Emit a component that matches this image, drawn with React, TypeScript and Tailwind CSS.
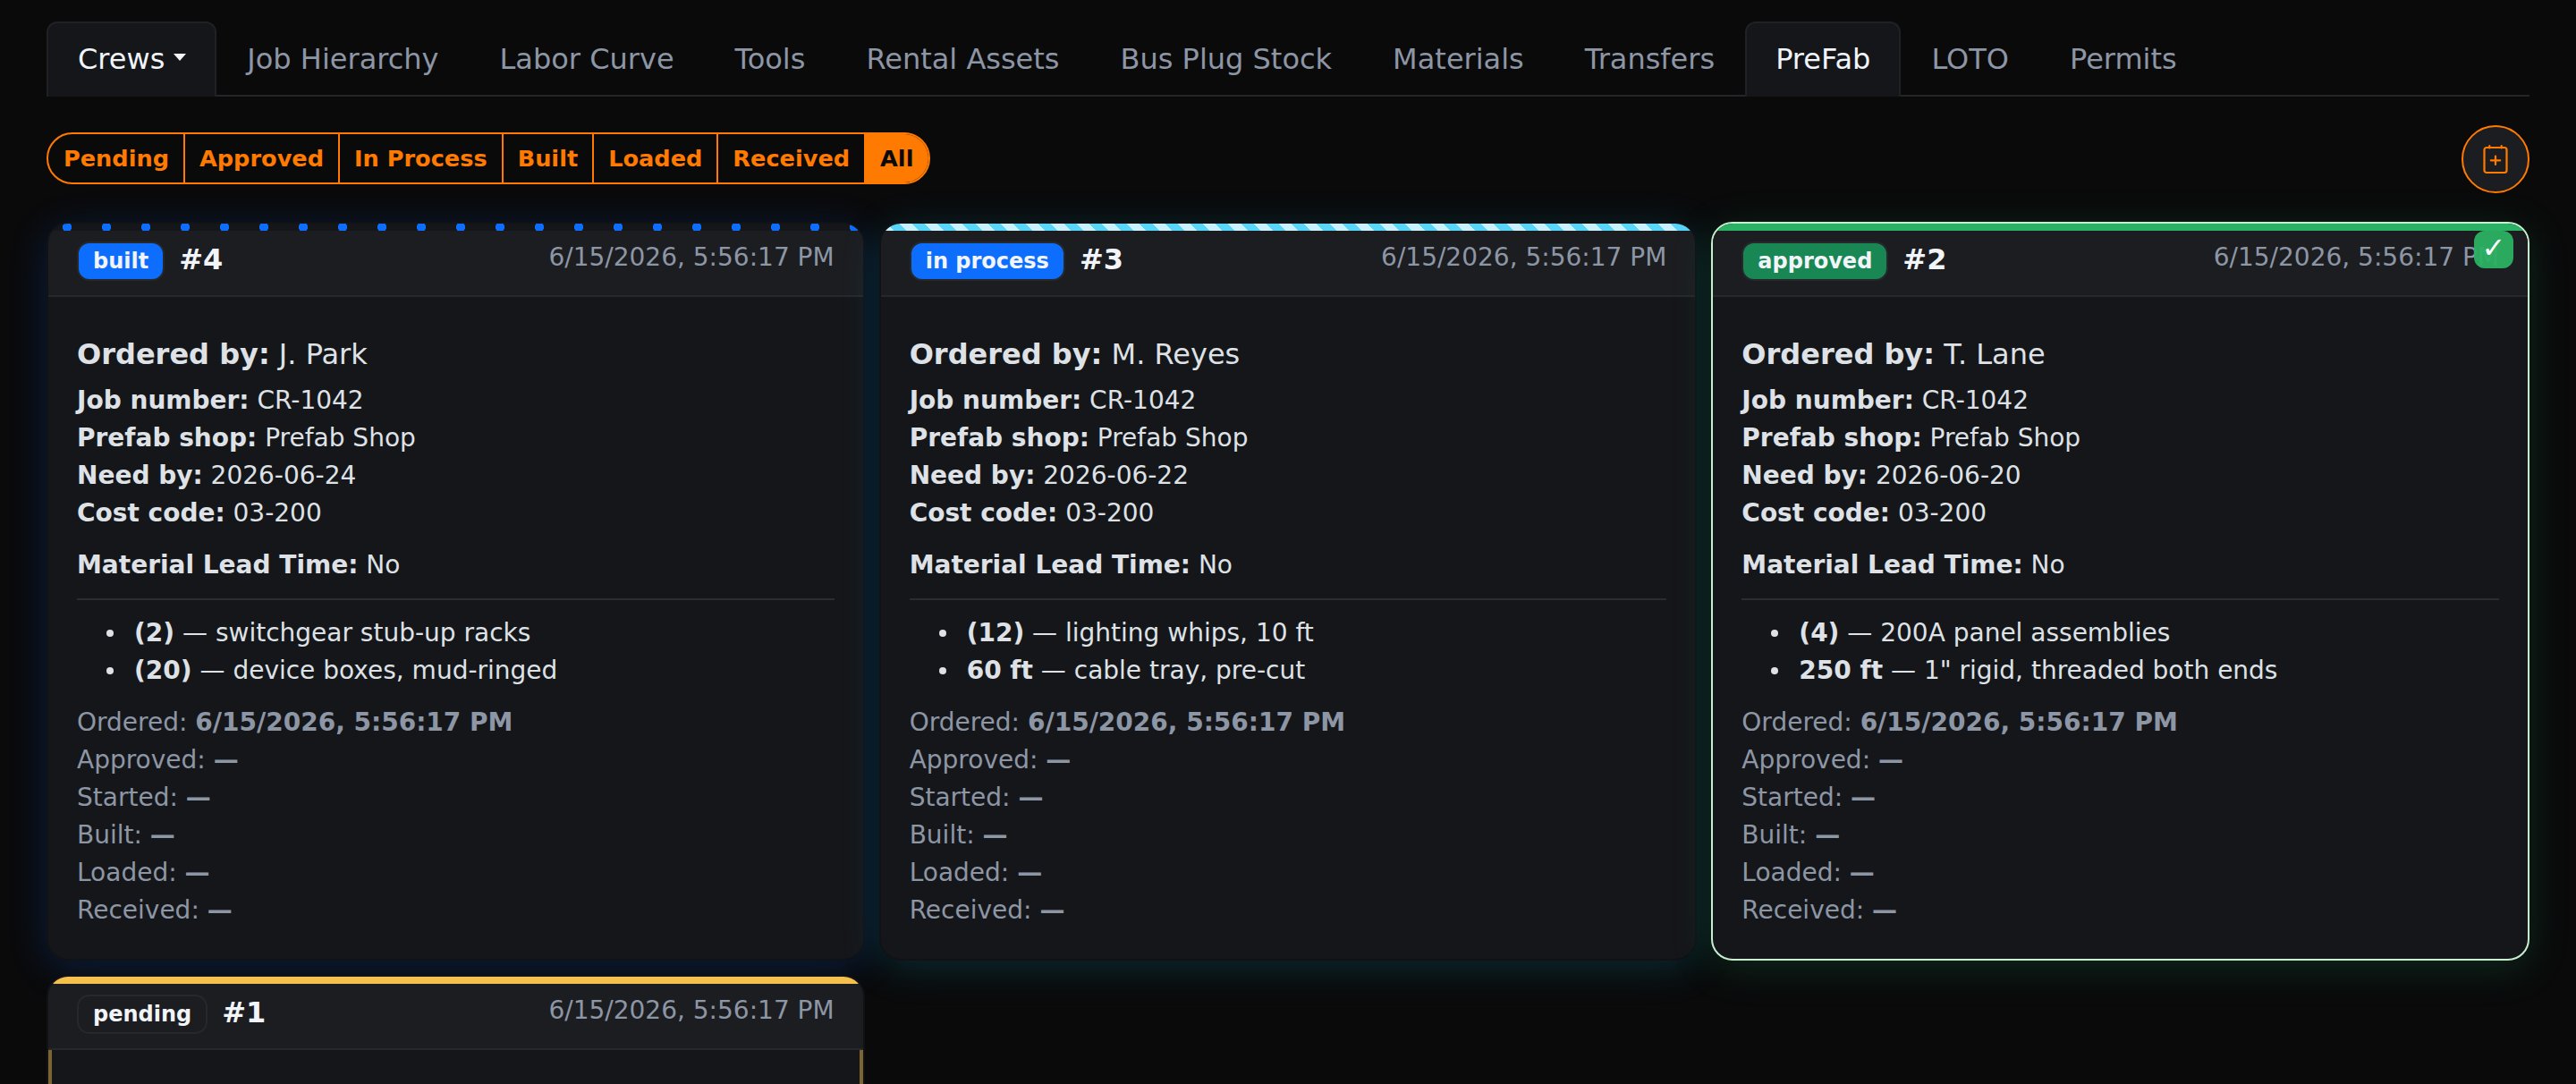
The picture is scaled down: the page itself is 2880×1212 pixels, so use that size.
const tabs = ['Job Hierarchy', 'Labor Curve', 'Tools', 'Rental Assets', 'Bus Plug Stock', 'Materials', 'Transfers'];
const filters = ['Pending', 'Approved', 'In Process', 'Built', 'Loaded', 'Received'];

type Order = {
  id: number;
  status: string;
  badge: string;
  stripe: string;
  card: string;
  by?: string;
  need?: string;
  items?: [string, string][];
  checked?: boolean;
};

const orders: Order[] = [
  {
    id: 4,
    status: 'built',
    badge: 'bg-[#0d6efd] text-[#f1f4f8]',
    stripe: 'bg-[radial-gradient(circle,#0d6efd_4.9px,transparent_5.3px)] bg-[length:44px_8px] bg-[position:-1px_0]',
    card: 'border-[#101215] shadow-[0_8px_44px_rgba(13,110,253,0.2)]',
    by: 'J. Park',
    need: '2026-06-24',
    items: [
      ['(2)', 'switchgear stub-up racks'],
      ['(20)', 'device boxes, mud-ringed'],
    ],
  },
  {
    id: 3,
    status: 'in process',
    badge: 'bg-[#0d6efd] text-[#f1f4f8]',
    stripe: 'bg-[repeating-linear-gradient(45deg,#c9f1fd_0,#c9f1fd_10px,#58d5f7_10px,#58d5f7_20px)]',
    card: 'border-[#101215] shadow-[0_8px_44px_rgba(13,202,240,0.17)]',
    by: 'M. Reyes',
    need: '2026-06-22',
    items: [
      ['(12)', 'lighting whips, 10 ft'],
      ['60 ft', 'cable tray, pre-cut'],
    ],
  },
  {
    id: 2,
    status: 'approved',
    badge: 'bg-[#198754] text-[#f1f4f8]',
    stripe: 'bg-[#2bb163]',
    card: 'border-[#c6efcf] shadow-[0_8px_44px_rgba(25,135,84,0.24)]',
    by: 'T. Lane',
    need: '2026-06-20',
    items: [
      ['(4)', '200A panel assemblies'],
      ['250 ft', '1" rigid, threaded both ends'],
    ],
    checked: true,
  },
  {
    id: 1,
    status: 'pending',
    badge: 'bg-[#1c1d21] text-[#f1f4f8]',
    stripe: 'bg-[#f6c04f]',
    card: 'border-[#101215]',
  },
];

function Details({ order }: { order: Order }) {
  return (
    <div className="px-8 pt-10 pb-[33px] text-[28px] leading-[42px] text-[#dee2e6]">
      <p className="mb-[7px] text-[32px] leading-[48px]">
        <b>Ordered by:</b> {order.by}
      </p>
      <p><b>Job number:</b> CR-1042</p>
      <p><b>Prefab shop:</b> Prefab Shop</p>
      <p><b>Need by:</b> {order.need}</p>
      <p><b>Cost code:</b> 03-200</p>
      <p className="mt-4"><b>Material Lead Time:</b> No</p>
      <div className="my-4 h-0.5 bg-[#2a2c30]" />
      <ul className="pl-16">
        {order.items?.map(([qty, name]) => (
          <li key={name} className="relative">
            <i className="absolute top-[17px] -left-[31px] size-2 rounded-full bg-[#dee2e6]" />
            <b>{qty}</b> — {name}
          </li>
        ))}
      </ul>
      <div className="mt-4 text-[#8d96a5]">
        <p>Ordered: <b>6/15/2026, 5:56:17 PM</b></p>
        <p>Approved: <b>—</b></p>
        <p>Started: <b>—</b></p>
        <p>Built: <b>—</b></p>
        <p>Loaded: <b>—</b></p>
        <p>Received: <b>—</b></p>
      </div>
    </div>
  );
}

function Card({ order }: { order: Order }) {
  return (
    <div className={`relative overflow-hidden rounded-[24px] border-2 bg-[#15161a] ${order.card}`}>
      <div className={`h-2 ${order.stripe}`} />
      <div className="flex h-[74px] items-start justify-between border-b-2 border-[#26282c] bg-[#1c1d21] px-8">
        <div className="mt-3 flex items-center gap-4">
          <span className={`rounded-[14px] border-2 border-[#26282c] px-4 text-[24px] leading-10 font-bold ${order.badge}`}>
            {order.status}
          </span>
          <span className="mb-1 text-[32px] leading-10 font-bold text-[#f1f4f8]">#{order.id}</span>
        </div>
        <span className="mt-[9px] text-[28px] leading-[42px] text-[#8d96a5]">6/15/2026, 5:56:17 PM</span>
      </div>
      {order.by ? <Details order={order} /> : <div className="h-[60px] border-x-4 border-[#7d6533]" />}
      {order.checked && (
        <span className="absolute top-2 right-4 flex h-[42px] w-11 items-center justify-center rounded-[12px] bg-[#2bb163]/95 pb-1 text-[32px] leading-none text-white">
          ✓
        </span>
      )}
    </div>
  );
}

export default function App() {
  return (
    <div className="h-[1212px] overflow-hidden bg-[#0a0a0b] px-[52px] pt-6 font-['DejaVu_Sans',sans-serif]">
      <nav className="flex border-b-2 border-[#232529] text-[32px] leading-[48px]">
        <span className="-mb-0.5 flex items-center rounded-t-xl border-2 border-b-0 border-[#1f2125] bg-[#14161a] pt-4 pr-8 pb-[18px] pl-[33px] text-[#f1f4f8]">
          Crews
          <i className="mb-1 ml-2.5 h-0 w-0 border-x-[7px] border-t-8 border-x-transparent border-t-[#f1f4f8]" />
        </span>
        {tabs.map((tab) => (
          <span key={tab} className="border-x-2 border-t-2 border-transparent px-8 py-4 text-[#8d96a5]">
            {tab}
          </span>
        ))}
        <span className="-mb-0.5 rounded-t-xl border-2 border-b-0 border-[#1f2125] bg-[#14161a] px-8 pt-4 pb-[18px] text-[#f1f4f8]">
          PreFab
        </span>
        {['LOTO', 'Permits'].map((tab) => (
          <span key={tab} className="border-x-2 border-t-2 border-transparent px-8 py-4 text-[#8d96a5]">
            {tab}
          </span>
        ))}
      </nav>

      <div className="mt-8 flex items-center justify-between">
        <div className="mb-0.5 flex overflow-hidden rounded-[29px] border-2 border-[#ff7a00] text-[25.6px] leading-[38px] font-bold text-[#ff7a00]">
          {filters.map((f) => (
            <span key={f} className="border-r-2 border-[#ff7a00] px-4 py-2 first:pl-[17px]">
              {f}
            </span>
          ))}
          <span className="bg-[#ff7a00] py-2 pr-[17px] pl-4 text-[#0a0a0b]">All</span>
        </div>
        <button className="flex size-[76px] items-center justify-center rounded-full border-2 border-[#ff7a00] bg-[#1c1d21]">
          <svg width="30" height="34" viewBox="0 0 30 34" fill="none" stroke="#ff7a00" strokeWidth="2.2" strokeLinecap="round">
            <rect x="2.5" y="4" width="25" height="28" rx="2.5" />
            <path d="M8.3 2v2.5M21.7 2v2.5M15 13.5v9.5M9.8 18.3h10.4" />
          </svg>
        </button>
      </div>

      <div className="mt-8 grid grid-cols-3 gap-4">
        {orders.map((o) => (
          <Card key={o.id} order={o} />
        ))}
      </div>
    </div>
  );
}
